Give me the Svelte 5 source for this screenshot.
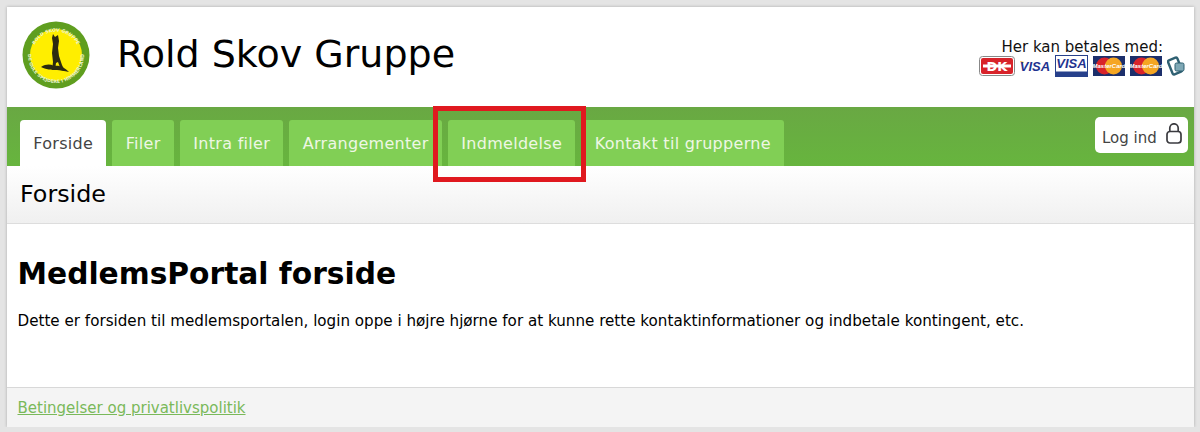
<script>
  const tabs = ['Forside', 'Filer', 'Intra filer', 'Arrangementer', 'Indmeldelse', 'Kontakt til grupperne'];
</script>

<div class="frame">
  <header class="top">
    <svg class="logo" viewBox="0 0 68 68" aria-label="Rold Skov Gruppe logo">
      <circle cx="34" cy="34" r="33.5" fill="#5f9e1f" />
      <circle cx="34" cy="34" r="26" fill="#ffee00" />
      <path d="M31 13l2 3 3-2 1 6-1 7 1 8 3 9 3 6-4-1-3-8-2 1-1 7h-3l1-8-1-9 1-9-1-6z" fill="#2c2a10" />
      <path d="M19 46c5-3 9-3 13-1 6-1 11 2 15 6-5-1-9-2-12-2-4 0-10 0-16-3z" fill="#2c2a10" />
      <path id="ringtop" d="M10.5 34a23.5 23.5 0 0 1 47 0" fill="none" />
      <path id="ringbottom" d="M6 34a28 28 0 0 0 56 0" fill="none" />
      <text class="ringtext"><textPath href="#ringtop" startOffset="50%" text-anchor="middle">ROLD SKOV GRUPPE</textPath></text>
      <text class="ringtext"><textPath href="#ringbottom" startOffset="50%" text-anchor="middle">DE GULE SPEJDERE I HIMMERLAND</textPath></text>
    </svg>
    <h1>Rold Skov Gruppe</h1>
    <div class="pay">
      <div class="paytext">Her kan betales med:</div>
      <div class="cards">
        <svg width="36" height="20" viewBox="0 0 36 20">
          <rect x=".5" y=".5" width="35" height="19" rx="3" fill="#fff" stroke="#888" />
          <rect x="2" y="2" width="32" height="16" rx="2" fill="#d8232a" />
          <rect x="4" y="8.5" width="28" height="3" fill="#fff" />
          <text x="18" y="14.5" class="dk">DK</text>
        </svg>
        <svg width="30" height="20" viewBox="0 0 30 20"><path d="M0 5l4 1-2 2z" fill="#f5a623" /><text x="15" y="15" class="visa">VISA</text></svg>
        <svg width="33" height="22" viewBox="0 0 33 22">
          <rect x=".5" y=".5" width="32" height="21" fill="#fff" stroke="#27408b" />
          <text x="16.5" y="13" class="visa">VISA</text>
          <rect x="1" y="16.5" width="31" height="5" fill="#27408b" />
        </svg>
        <svg width="32" height="20" viewBox="0 0 32 20">
          <rect width="32" height="20" fill="#1c2f6b" />
          <circle cx="11.5" cy="10" r="8.5" fill="#d8232a" />
          <circle cx="20.5" cy="10" r="8.5" fill="#f5a623" />
          <text x="16" y="12" class="mc">MasterCard</text>
        </svg>
        <svg width="32" height="20" viewBox="0 0 32 20">
          <rect width="32" height="20" fill="#1c2f6b" />
          <circle cx="11.5" cy="10" r="8.5" fill="#d8232a" />
          <circle cx="20.5" cy="10" r="8.5" fill="#f5a623" />
          <text x="16" y="12" class="mc">MasterCard</text>
        </svg>
        <svg width="19" height="20" viewBox="0 0 19 20">
          <rect x="3" y="2.5" width="10" height="15" rx="1.5" transform="rotate(-22 8 10)" fill="#fff" stroke="#2f6072" stroke-width="2.4" />
          <rect x="8" y="7" width="9" height="8" rx="1.5" fill="#7fa8b5" stroke="#2f6072" />
        </svg>
      </div>
    </div>
  </header>

  <nav class="nav">
    <ul class="tabs">
      {#each tabs as tab, i}
        <li class="tab" class:active={i === 0}>{tab}</li>
      {/each}
    </ul>
    <button class="login">
      <span class="logintext">Log ind</span>
      <svg width="16" height="21" viewBox="0 0 16 21" fill="none" stroke="#3b3b40" stroke-width="1.7">
        <rect x="1" y="8.5" width="14" height="11.5" rx="3" />
        <path d="M3.8 8.5V5a4.2 4.2 0 0 1 8.4 0v3.5" />
      </svg>
    </button>
  </nav>

  <div class="titlebar">Forside</div>

  <main class="content">
    <h2>MedlemsPortal forside</h2>
    <p>Dette er forsiden til medlemsportalen, login oppe i højre hjørne for at kunne rette kontaktinformationer og indbetale kontingent, etc.</p>
  </main>

  <footer class="foot"><a href="#terms">Betingelser og privatlivspolitik</a></footer>
</div>
<div class="mark"></div>

<style>
  :global(body) {
    margin: 0;
    background: #e4e4e4;
  }
  .frame {
    box-sizing: border-box;
    width: 1187px;
    height: 420px;
    margin: 7px 0 0 7px;
    background: #fff;
    display: flex;
    flex-direction: column;
    font-family: "DejaVu Sans", Verdana, sans-serif;
    color: #000;
    box-shadow: 0 0 3px rgba(0, 0, 0, 0.25);
  }
  .top {
    height: 100px;
    flex: none;
    display: flex;
    align-items: center;
    padding: 0 8px 0 15px;
    box-sizing: border-box;
  }
  .logo {
    width: 68px;
    height: 68px;
    flex: none;
    margin-top: -5px;
  }
  .ringtext {
    font-size: 4.6px;
    font-weight: 700;
    fill: #e9f3c8;
    font-family: "DejaVu Sans", sans-serif;
  }
  h1 {
    margin: -7px 0 0 27px;
    font-size: 38px;
    font-weight: 400;
    line-height: 1;
    white-space: nowrap;
  }
  .pay {
    margin-left: auto;
    margin-top: 1px;
    display: flex;
    flex-direction: column;
    align-items: flex-end;
  }
  .paytext {
    font-size: 15px;
    line-height: 16px;
    margin-right: 23px;
    color: #111;
  }
  .cards {
    display: flex;
    align-items: center;
    gap: 5px;
    height: 22px;
  }
  .dk {
    font: 700 13px "DejaVu Sans", sans-serif;
    text-anchor: middle;
    fill: #fff;
  }
  .visa {
    font: italic 700 13px "Liberation Sans", sans-serif;
    text-anchor: middle;
    fill: #1f3390;
  }
  .mc {
    font: italic 700 6px "Liberation Sans", sans-serif;
    text-anchor: middle;
    fill: #fff;
  }
  .nav {
    height: 59px;
    flex: none;
    display: flex;
    justify-content: space-between;
    align-items: flex-end;
    padding: 0 6px 0 13px;
    background: linear-gradient(#69a843, #67b53e);
  }
  .tabs {
    display: flex;
    gap: 6px;
    margin: 0;
    padding: 0;
    list-style: none;
  }
  .tab {
    box-sizing: border-box;
    height: 46px;
    padding: 0 13.3px;
    display: flex;
    align-items: center;
    font-size: 16px;
    letter-spacing: 0.3px;
    color: #eef7e4;
    background: #81cf55;
    border-radius: 3px 3px 0 0;
  }
  .tab.active {
    background: #fff;
    color: #444;
    border-radius: 4px 4px 0 0;
  }
  .login {
    align-self: flex-start;
    margin-top: 10px;
    height: 36px;
    width: 93px;
    padding: 0 0 0 7px;
    display: flex;
    align-items: center;
    gap: 9px;
    border: 0;
    border-radius: 5px;
    background: #fff;
    font: 15px "DejaVu Sans", sans-serif;
    color: #444;
  }
  .login svg {
    margin-top: -4px;
  }
  .logintext {
    margin-top: 6px;
  }
  .titlebar {
    height: 58px;
    flex: none;
    box-sizing: border-box;
    padding: 0 0 2px 13px;
    display: flex;
    align-items: center;
    font-size: 23.8px;
    background: linear-gradient(#fff, #f0f0f0);
    border-bottom: 1px solid #ddd;
  }
  .content {
    flex: 1;
    padding: 0 10.5px;
  }
  h2 {
    margin: 32px 0 0;
    font-size: 29.7px;
    line-height: 36px;
  }
  p {
    margin: 20px 0 0;
    font-size: 15.15px;
    line-height: 18px;
  }
  .foot {
    height: 40px;
    flex: none;
    box-sizing: border-box;
    display: flex;
    align-items: center;
    padding-left: 10.5px;
    background: #f4f4f4;
    border-top: 1px solid #d8d8d8;
    font-size: 15px;
  }
  .foot a {
    color: #7ab95a;
  }
  .mark {
    position: absolute;
    left: 433px;
    top: 106px;
    width: 153px;
    height: 76px;
    box-sizing: border-box;
    border: 5px solid #e0191f;
  }
</style>
